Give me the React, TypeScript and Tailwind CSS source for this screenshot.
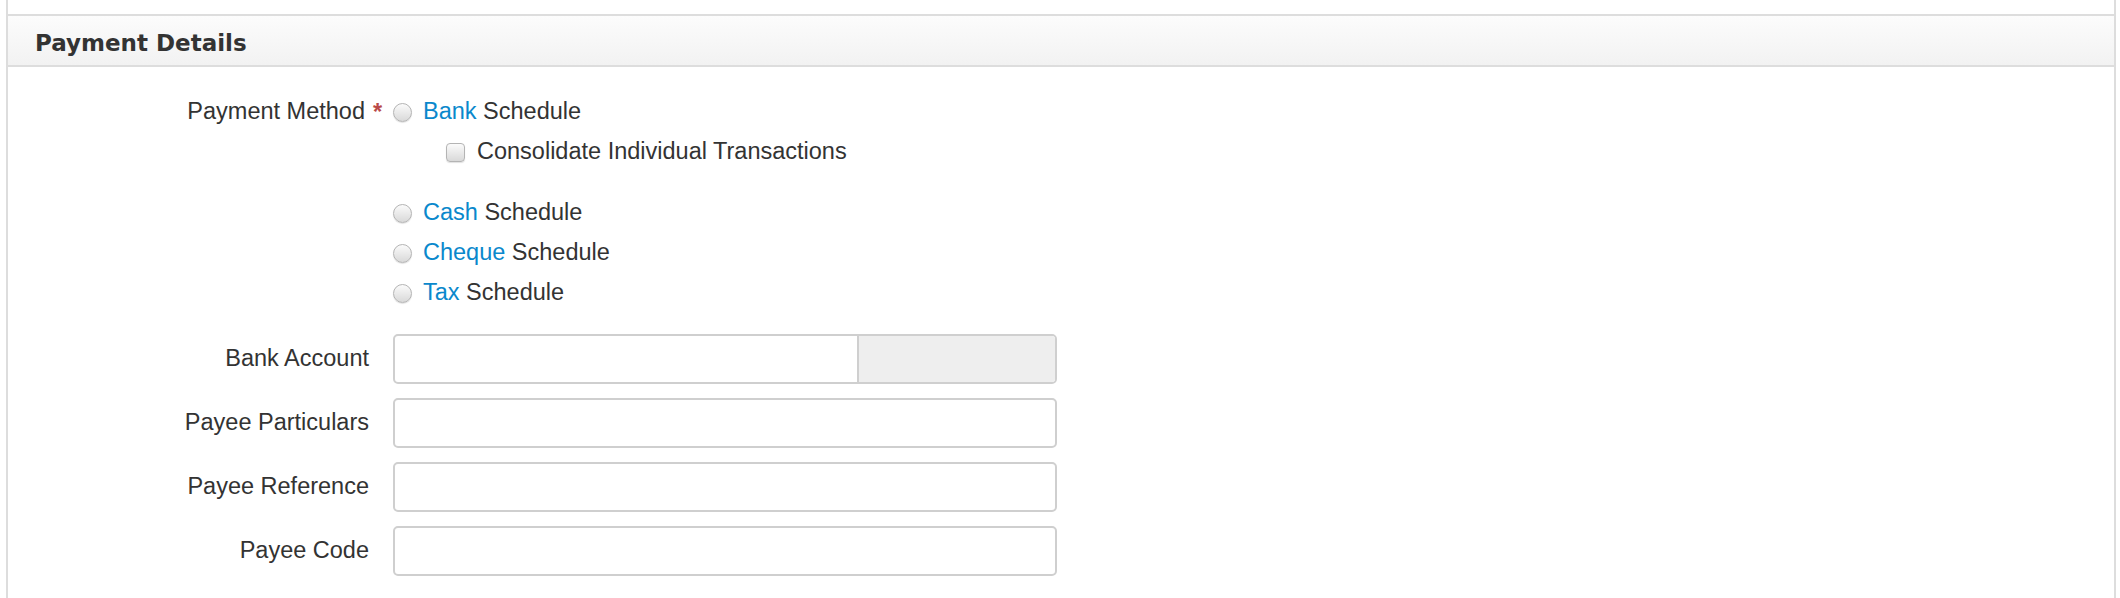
import React from "react";

type Choice = {
  key: string;
  link: string;
};

const choices: Choice[] = [
  { key: "cash", link: "Cash" },
  { key: "cheque", link: "Cheque" },
  { key: "tax", link: "Tax" },
];

function Radio() {
  return (
    <span className="inline-block w-[19px] h-[19px] shrink-0 rounded-full border border-[#b4b4b4] bg-gradient-to-b from-[#fbfbfb] to-[#d9d9d9] shadow-[0_1px_1px_rgba(0,0,0,0.12)]" />
  );
}

function Checkbox() {
  return (
    <span className="inline-block w-[19px] h-[19px] shrink-0 rounded-[4px] border border-[#b4b4b4] bg-gradient-to-b from-[#fbfbfb] to-[#d9d9d9] shadow-[0_1px_1px_rgba(0,0,0,0.12)]" />
  );
}

function Field({ label, addon }: { label: string; addon?: boolean }) {
  return (
    <div className="flex items-center h-[50px]">
      <label className="w-[361px] shrink-0 text-right">{label}</label>
      <div className="ml-[24px] flex w-[664px] h-[50px] rounded-[5px] border-2 border-[#cfcfcf] bg-white overflow-hidden">
        <input className="flex-1 min-w-0 h-full outline-none bg-transparent px-3" />
        {addon && <span className="w-[198px] h-full border-l-2 border-[#cfcfcf] bg-[#eeeeee]" />}
      </div>
    </div>
  );
}

export default function App() {
  return (
    <div
      className="w-[2120px] h-[598px] bg-white text-[#333333] text-[23.5px] overflow-hidden"
      style={{ fontFamily: '"Liberation Sans", Arial, sans-serif' }}
    >
      <div className="ml-[6px] w-[2110px] h-full border-x-2 border-[#dddddd]">
        <div className="h-[14px]" />
        <div className="h-[53px] border-y-2 border-[#dddddd] bg-gradient-to-b from-[#fcfcfc] to-[#f2f2f2] flex items-center pl-[27px] pt-[6px]">
          <h2
            className="text-[23px] font-bold text-[#333333] leading-none"
            style={{ fontFamily: '"DejaVu Sans", Verdana, sans-serif' }}
          >
            Payment Details
          </h2>
        </div>

        <div className="pt-[25px]">
          {/* payment method */}
          <div className="flex items-center h-[40px]">
            <div className="w-[361px] shrink-0 text-right">
              <span className="relative mr-[4px]">
                Payment Method
                <span className="absolute left-[calc(100%+8px)] -top-[3px] font-bold text-[#b94a48]">*</span>
              </span>
            </div>
            <div className="ml-[24px] flex items-center gap-[11px]">
              <Radio />
              <span>
                <span className="text-[#0a88cc]">Bank</span> Schedule
              </span>
            </div>
          </div>
          <div className="flex items-center h-[40px] pl-[438px] gap-[12px]">
            <Checkbox />
            <span>Consolidate Individual Transactions</span>
          </div>

          <div className="mt-[21px] flex flex-col">
            {choices.map((c) => (
              <div key={c.key} className="flex items-center h-[40px] pl-[385px] gap-[11px]">
                <Radio />
                <span>
                  <span className="text-[#0a88cc]">{c.link}</span> Schedule
                </span>
              </div>
            ))}
          </div>

          <div className="mt-[21px] flex flex-col gap-[14px]">
            <Field label="Bank Account" addon />
            <Field label="Payee Particulars" />
            <Field label="Payee Reference" />
            <Field label="Payee Code" />
          </div>
        </div>
      </div>
    </div>
  );
}
